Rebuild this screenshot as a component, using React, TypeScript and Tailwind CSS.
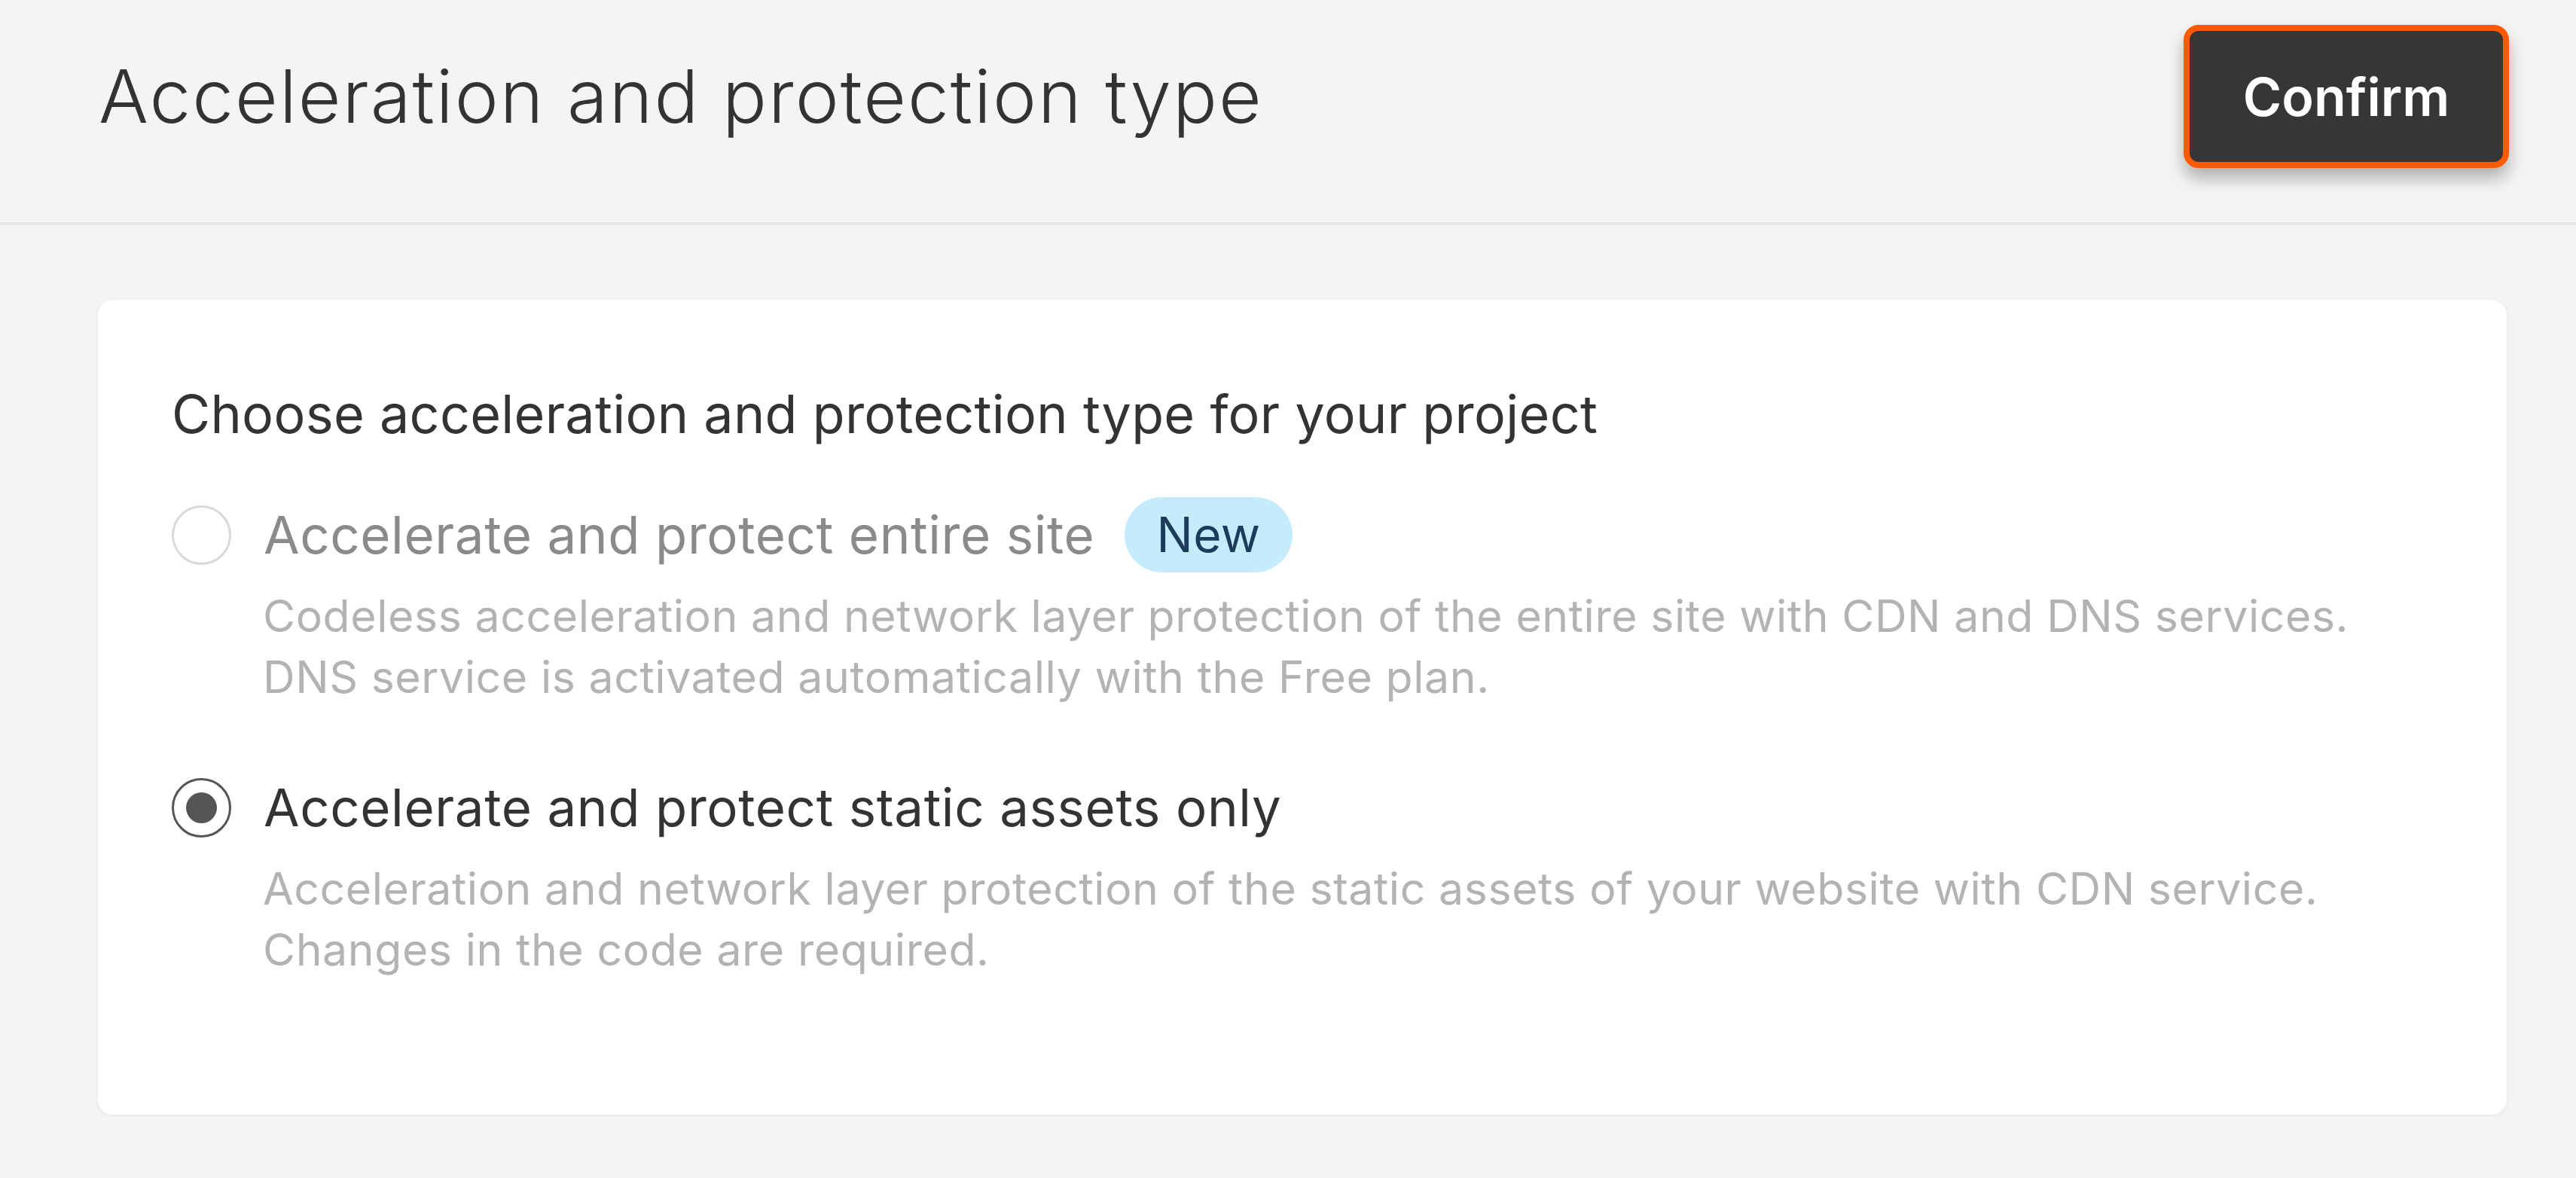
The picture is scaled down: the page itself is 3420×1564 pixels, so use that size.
import React, { useState } from "react";

const options = [
  {
    id: "entire",
    label: "Accelerate and protect entire site",
    badge: "New",
    disabled: true,
    description: [
      "Codeless acceleration and network layer protection of the entire site with CDN and DNS services.",
      "DNS service is activated automatically with the Free plan.",
    ],
  },
  {
    id: "static",
    label: "Accelerate and protect static assets only",
    badge: "",
    disabled: false,
    description: [
      "Acceleration and network layer protection of the static assets of your website with CDN service.",
      "Changes in the code are required.",
    ],
  },
];

export default function App() {
  const [selected, setSelected] = useState("static");

  return (
    <main className="min-h-screen bg-[#f4f4f4] font-['Inter','Liberation_Sans',sans-serif] text-[#333]">
      {/* header */}
      <header className="flex items-center justify-between pl-[131px] pr-[89px] pt-[33px] pb-[72px] border-b-[4px] border-[#e8e8e8]">
        <h1 className="text-[98px] leading-[1.2] font-light text-[#333] tracking-[2px]">
          Acceleration and protection type
        </h1>
        <button
          type="button"
          className="w-[432px] h-[190px] rounded-[20px] border-[8px] border-[#ff5a00] bg-[#363636] text-white text-[70px] font-semibold shadow-[0_14px_22px_rgba(0,0,0,0.28)]"
        >
          Confirm
        </button>
      </header>

      {/* card */}
      <div className="pl-[130px] pr-[92px] pt-[99px] pb-[85px]">
        <section className="bg-white rounded-[20px] shadow-[0_1px_5px_rgba(0,0,0,0.07)] pl-[98px] pr-[98px] pt-[110px] pb-[179px]">
          <h2 className="text-[70px] leading-[84px] font-normal text-[#333] tracking-[0.3px]">
            Choose acceleration and protection type for your project
          </h2>

          <div className="flex flex-col mt-[68px] gap-[83px]">
            {options.map((opt) => {
              const checked = selected === opt.id;
              return (
                <div key={opt.id}>
                  <label
                    className={
                      "flex items-center h-[100px] " +
                      (opt.disabled ? "cursor-not-allowed" : "cursor-pointer")
                    }
                    onClick={() => !opt.disabled && setSelected(opt.id)}
                  >
                    <span
                      className={
                        "flex items-center justify-center w-[79px] h-[79px] rounded-full border-[3px] shrink-0 " +
                        (checked ? "border-[#555]" : "border-[#d9d9d9]")
                      }
                    >
                      {checked && (
                        <span className="w-[41px] h-[41px] rounded-full bg-[#555]" />
                      )}
                    </span>
                    <span
                      className={
                        "ml-[43px] text-[69px] leading-[84px] tracking-[0.6px] " +
                        (opt.disabled ? "text-[#8a8a8a]" : "text-[#333]")
                      }
                    >
                      {opt.label}
                    </span>
                    {opt.badge && (
                      <span className="ml-[40px] h-[100px] px-[42px] flex items-center rounded-full bg-[#c5ecfd] text-[#1d3b5a] text-[64px] tracking-[0.5px]">
                        {opt.badge}
                      </span>
                    )}
                  </label>
                  <div className="ml-[121px] mt-[17px] text-[59px] leading-[81px] tracking-[0.55px] text-[#b3b3b3]">
                    {opt.description.map((line, i) => (
                      <p key={i}>{line}</p>
                    ))}
                  </div>
                </div>
              );
            })}
          </div>
        </section>
      </div>
    </main>
  );
}
